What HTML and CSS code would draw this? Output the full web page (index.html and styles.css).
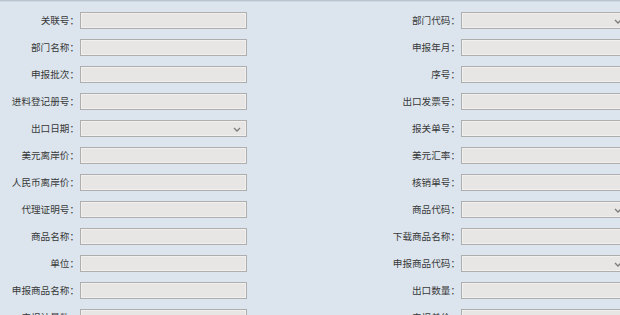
FILE: index.html
```html
<!DOCTYPE html>
<html lang="zh">
<head>
<meta charset="utf-8">
<title>Form</title>
<link rel="stylesheet" href="styles.css">
</head>
<body>
<div class="page">
  <form class="form">
    <label class="lbl">关联号：</label><div class="field"></div>
    <label class="lbl">部门代码：</label><div class="field select"><svg class="chev" viewBox="0 0 8 5"><path d="M1 1 L4 4 L7 1"/></svg></div>

    <label class="lbl">部门名称：</label><div class="field"></div>
    <label class="lbl">申报年月：</label><div class="field"></div>

    <label class="lbl">申报批次：</label><div class="field"></div>
    <label class="lbl">序号：</label><div class="field"></div>

    <label class="lbl">进料登记册号：</label><div class="field"></div>
    <label class="lbl">出口发票号：</label><div class="field"></div>

    <label class="lbl">出口日期：</label><div class="field select"><svg class="chev" viewBox="0 0 8 5"><path d="M1 1 L4 4 L7 1"/></svg></div>
    <label class="lbl">报关单号：</label><div class="field"></div>

    <label class="lbl">美元离岸价：</label><div class="field"></div>
    <label class="lbl">美元汇率：</label><div class="field"></div>

    <label class="lbl">人民币离岸价：</label><div class="field"></div>
    <label class="lbl">核销单号：</label><div class="field"></div>

    <label class="lbl">代理证明号：</label><div class="field"></div>
    <label class="lbl">商品代码：</label><div class="field select"><svg class="chev" viewBox="0 0 8 5"><path d="M1 1 L4 4 L7 1"/></svg></div>

    <label class="lbl">商品名称：</label><div class="field"></div>
    <label class="lbl">下载商品名称：</label><div class="field"></div>

    <label class="lbl">单位：</label><div class="field"></div>
    <label class="lbl">申报商品代码：</label><div class="field select"><svg class="chev" viewBox="0 0 8 5"><path d="M1 1 L4 4 L7 1"/></svg></div>

    <label class="lbl">申报商品名称：</label><div class="field"></div>
    <label class="lbl">出口数量：</label><div class="field"></div>

    <label class="lbl">申报计量数：</label><div class="field"></div>
    <label class="lbl">申报单价：</label><div class="field"></div>
  </form>
</div>
</body>
</html>
```

FILE: styles.css
```css
html, body {
  margin: 0;
  padding: 0;
  background: #dce5ee;
  overflow: hidden;
}

.page {
  width: 640px;
  height: 315px;
  border-top: 1px solid #b7c3ce;
  box-shadow: inset 0 1px 0 #cfd9e3;
  box-sizing: border-box;
  padding-top: 11px;
  font-family: "Noto Sans CJK SC", "Noto Sans", sans-serif;
  font-size: 9.6px;
  color: #383838;
}

.form {
  display: grid;
  grid-template-columns: 80px 167px 214px 167px;
  grid-auto-rows: 17px;
  row-gap: 10px;
}

.lbl {
  text-align: right;
  padding-right: 1px;
  line-height: 17px;
  white-space: nowrap;
}

.field {
  position: relative;
  box-sizing: border-box;
  height: 17px;
  background: #e7e6e4;
  border: 1px solid #aeaeae;
  box-shadow: inset 0 0 0 1px #f1f0ee;
}

.chev {
  position: absolute;
  right: 5px;
  top: 6px;
  width: 8px;
  height: 5px;
  fill: none;
  stroke: #7c7c7c;
  stroke-width: 1.3;
}
```
